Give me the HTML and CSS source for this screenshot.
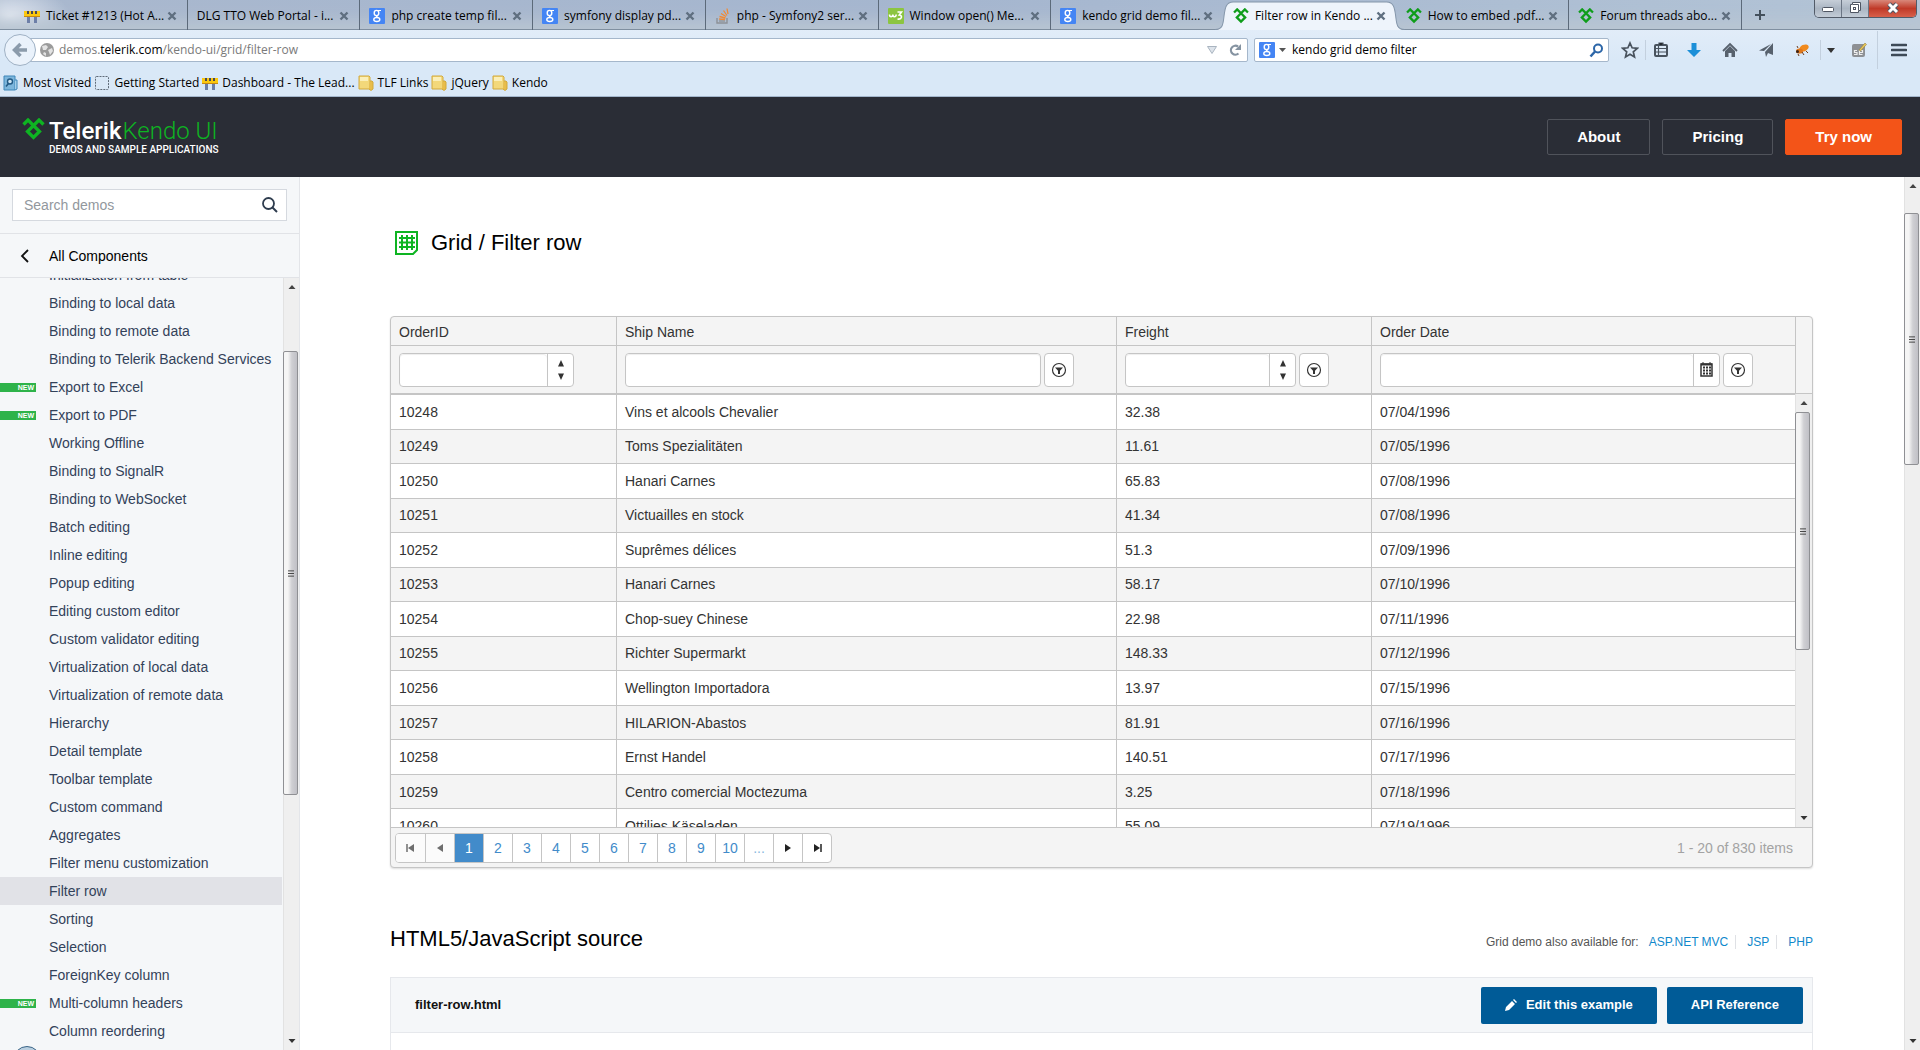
FILE: index.html
```html
<!DOCTYPE html>
<html lang="en">
<head>
<meta charset="utf-8">
<title>Filter row in Kendo UI Grid</title>
<link rel="stylesheet" href="styles.css">
</head>
<body>
<svg class="defs" aria-hidden="true">
  <symbol id="i-barrier" viewBox="0 0 16 16"><path d="M3 8h3v7H3zM10 8h3v7h-3z" fill="#6d7fa8"/><path d="M0 3h16v6H0z" fill="#fbc80f"/><path d="M3 3h2v3H3zM7 3h2v3H7zM11 3h2v3h-2z" fill="#4a4a52"/><path d="M0 8h16v1H0z" fill="#c88a10"/></symbol>
  <symbol id="i-g" viewBox="0 0 16 16"><rect width="16" height="16" rx="1" fill="#4485f4"/><ellipse cx="7.500" cy="5" rx="2.300" ry="2.600" fill="none" stroke="#fff" stroke-width="1.400"/><ellipse cx="7.800" cy="11.500" rx="3" ry="2" fill="none" stroke="#fff" stroke-width="1.400"/><path d="M8 2.500h4M7 8l2 1.500" stroke="#fff" stroke-width="1.200"/></symbol>
  <symbol id="i-so" viewBox="0 0 16 16"><path d="M2 10v5h10v-5" fill="none" stroke="#8d9197" stroke-width="1.400"/><path d="M4 13h6" stroke="#8d9197" stroke-width="1.300"/><path d="M4 11l6 .5M4.500 8.500l6 1.500M6 5.500l5 3M8.500 2.500l3.500 5M12 .5l1 5.500" stroke="#f08a35" stroke-width="1.300"/></symbol>
  <symbol id="i-w3" viewBox="0 0 16 16"><rect width="16" height="16" rx="1" fill="#8cc540"/><path d="M1.500 6.500c0 3 3 3 3.300 0 0 3 3.200 3 3.400 0" fill="none" stroke="#fff" stroke-width="1.600"/><path d="M9.500 4h4l-2.200 3c3.200 0 3 5-1.800 4" fill="none" stroke="#fff" stroke-width="1.600"/></symbol>
  <symbol id="i-telerik" viewBox="0 0 23 23"><path d="M1.500 6.500L6 2l11.500 11.500-6 6-6-6L17 2l4.500 4.500" fill="none" stroke="currentColor" stroke-width="3.300"/></symbol>
  <symbol id="i-x" viewBox="0 0 10 10"><path d="M1.500 1.500l7 7M8.500 1.500l-7 7" stroke="#5f6f80" stroke-width="2.400"/></symbol>
  <symbol id="i-folder" viewBox="0 0 16 16"><path d="M1 1h10l1 1v12H1z" fill="#f3d87a" stroke="#d2a93c"/><path d="M12 6h2l1 1v7l-2 1.500L11 14" fill="#e8bd4b" stroke="#d2a93c"/><path d="M2 2h8v4H2z" fill="#fbefb8"/></symbol>
  <symbol id="i-filter" viewBox="0 0 16 16"><circle cx="8" cy="8" r="6.500" fill="none" stroke="#333" stroke-width="1.200"/><path d="M4 5.500h8L9 8.800V12H7V8.800z" fill="#333"/></symbol>
  <symbol id="i-spin" viewBox="0 0 8 20"><path d="M1 6.500L4 0l3 6.500zM1 13.500L4 20l3-6.500z" fill="#333"/></symbol>
  <symbol id="i-up" viewBox="0 0 8 8"><path d="M.5 6L4 2l3.500 4z" fill="#444"/></symbol>
  <symbol id="i-down" viewBox="0 0 8 8"><path d="M.5 2L4 6l3.500-4z" fill="#333"/></symbol>
  <symbol id="i-grip" viewBox="0 0 8 9"><path d="M0 1h8M0 4.500h8M0 8h8" stroke="#444" stroke-width="1.300"/></symbol>
</svg>

<div class="browser">
  <div class="tabstrip">
    <div class="tabs">
      <div class="tab"><svg class="fav"><use href="#i-barrier"/></svg><span>Ticket #1213 (Hot A...</span><svg class="x"><use href="#i-x"/></svg></div>
      <div class="tab"><span>DLG TTO Web Portal - i...</span><svg class="x"><use href="#i-x"/></svg></div>
      <div class="tab"><svg class="fav"><use href="#i-g"/></svg><span>php create temp fil...</span><svg class="x"><use href="#i-x"/></svg></div>
      <div class="tab"><svg class="fav"><use href="#i-g"/></svg><span>symfony display pd...</span><svg class="x"><use href="#i-x"/></svg></div>
      <div class="tab"><svg class="fav"><use href="#i-so"/></svg><span>php - Symfony2 ser...</span><svg class="x"><use href="#i-x"/></svg></div>
      <div class="tab"><svg class="fav"><use href="#i-w3"/></svg><span>Window open() Me...</span><svg class="x"><use href="#i-x"/></svg></div>
      <div class="tab before-active"><svg class="fav"><use href="#i-g"/></svg><span>kendo grid demo fil...</span><svg class="x"><use href="#i-x"/></svg></div>
      <div class="tab active"><svg class="shape" viewBox="0 0 189 30" preserveAspectRatio="none"><path d="M0 30C8 30 8 24 9 16C10 8 11 2 18 2H171C178 2 179 8 180 16C181 24 181 30 189 30z" fill="#eef4fb"/><path d="M0 29.500C8 29.500 8 24 9 16C10 8 11 2 18 2H171C178 2 179 8 180 16C181 24 181 29.500 189 29.500" fill="none" stroke="#8496aa"/></svg><svg class="fav green"><use href="#i-telerik"/></svg><span>Filter row in Kendo ...</span><svg class="x"><use href="#i-x"/></svg></div>
      <div class="tab"><svg class="fav green"><use href="#i-telerik"/></svg><span>How to embed .pdf...</span><svg class="x"><use href="#i-x"/></svg></div>
      <div class="tab"><svg class="fav green"><use href="#i-telerik"/></svg><span>Forum threads abo...</span><svg class="x"><use href="#i-x"/></svg></div>
    </div>
    <button class="newtab" aria-label="New tab"><svg width="12" height="12"><path d="M6 1v10M1 6h10" stroke="#43505c" stroke-width="2"/></svg></button>
    <div class="winbtns">
      <button aria-label="Minimize"><svg width="14" height="16"><rect x="1.500" y="7.500" width="11" height="4" rx="1" fill="#fff" stroke="#4f5663"/></svg></button>
      <button aria-label="Restore"><svg width="14" height="16"><path d="M4.500 2.500h8v8h-2v2h-8v-8h2z" fill="#fff" stroke="#4f5663"/><path d="M5 4.500h5.500V10" fill="none" stroke="#4f5663"/><rect x="5.500" y="7.500" width="2" height="2" fill="#fff" stroke="#4f5663"/></svg></button>
      <button class="close" aria-label="Close"><svg width="14" height="16"><path d="M3 4l8 8M11 4l-8 8" stroke="#4f5663" stroke-width="5"/><path d="M3 4l8 8M11 4l-8 8" stroke="#fff" stroke-width="3"/></svg></button>
    </div>
  </div>

  <div class="navbar">
    <button class="back" aria-label="Back"><svg width="16" height="16"><path d="M15 8H4M8.500 2L2.500 8l6 6" fill="none" stroke="#8b9bab" stroke-width="3.500"/></svg></button>
    <div class="url">
      <svg width="14" height="14"><circle cx="7" cy="7" r="7" fill="#9b9b9b"/><path d="M2 3l4-1 2 2-2 3-3 0zM8 7l4-2 1 3-3 4-1-3zM4 9l2 1v3l-3-2z" fill="#e3e3e3"/></svg>
      <span class="addr">demos.<b>telerik.com</b>/kendo-ui/grid/filter-row</span>
      <svg width="10" height="8"><path d="M.5 .5h9L5 7.500z" fill="#dde3ea" stroke="#a9b4c0"/></svg>
      <svg width="12" height="14"><path d="M9.500 10.500A4.500 4.500 0 1 1 9 3.500" fill="none" stroke="#8593a1" stroke-width="2.200"/><path d="M12 1v6H6z" fill="#8593a1"/></svg>
    </div>
    <div class="search">
      <svg width="16" height="16"><use href="#i-g"/></svg>
      <svg width="7" height="4"><path d="M0 0h7L3.500 4z" fill="#555"/></svg>
      <input type="text" aria-label="Search" value="kendo grid demo filter">
      <svg width="15" height="15"><circle cx="9" cy="5.500" r="4" fill="none" stroke="#2c66a8" stroke-width="2"/><path d="M6 8.500L1.500 13.500" stroke="#2c66a8" stroke-width="2.500"/></svg>
    </div>
    <div class="tools">
      <button class="w30" aria-label="Bookmark"><svg width="18" height="18"><path d="M9 2l2.100 4.800 5.200.5-4 3.500 1.200 5.200L9 13.300 4.500 16l1.200-5.200-4-3.500 5.200-.5z" fill="none" stroke="#49535e" stroke-width="1.700"/></svg></button>
      <i class="sep"></i>
      <button class="w30" aria-label="Bookmarks list"><svg width="16" height="16"><rect x="2" y="3" width="12" height="11" rx="1" fill="none" stroke="#49535e" stroke-width="2"/><path d="M6 1h4v2H6zM3 6.500h10M3 10h10M5.500 4v9" stroke="#49535e" stroke-width="1.200"/></svg></button>
      <button class="w36" aria-label="Downloads"><svg width="16" height="16"><path d="M5.500 1h5v7H15l-7 7-7-7h4.500z" fill="#1c8fd8"/></svg></button>
      <button class="w36" aria-label="Home"><svg width="16" height="16"><path d="M1 9l7-7 7 7" fill="none" stroke="#57616d" stroke-width="1.800"/><path d="M3 9l5-5 5 5v6H9.500v-4h-3v4H3z" fill="#57616d"/></svg></button>
      <button class="w36" aria-label="Send"><svg width="16" height="16"><path d="M15 1v12l-5-2-2 4-1-5zM13 2L6 9 1 8.500z" fill="#57616d"/></svg></button>
      <button class="w36" aria-label="Firebug"><svg width="16" height="16"><ellipse cx="10" cy="6" rx="5" ry="3.200" transform="rotate(-25 10 6)" fill="#f08a1d"/><ellipse cx="5.500" cy="9" rx="3.500" ry="2.600" fill="#e0761a"/><circle cx="3.500" cy="9.500" r="1.500" fill="#3a2318"/><path d="M4 12l1 2M8 10l2 3M12 9l2 2M4 6l-1-2" stroke="#6b3a1a"/></svg></button>
      <i class="sep"></i>
      <button class="w20" aria-label="More"><svg width="8" height="5"><path d="M0 0h8L4 5z" fill="#333"/></svg></button>
      <button class="w36" aria-label="Selenium"><svg width="16" height="16"><rect x="1" y="2" width="13" height="13" rx="2" fill="#8d9094"/><path d="M6 8.500H3.500v2H6v2H3M11.500 12.500H8.500v-4h3v2h-3" fill="none" stroke="#eee" stroke-width="1.200"/><path d="M8 8l6-7 1.500 1.500L9.500 9z" fill="#e9c75a" stroke="#8a7430" stroke-width=".5"/></svg></button>
      <i class="sep tall"></i>
      <button class="w42" aria-label="Menu"><svg width="16" height="14"><path d="M1 2h14M1 7h14M1 12h14" stroke="#3e4a57" stroke-width="2.600" stroke-linecap="round"/></svg></button>
    </div>
  </div>

  <div class="bookmarks">
    <a href="#"><svg width="16" height="16"><path d="M1 1h11v14H1z" fill="#7db6dc" stroke="#3f86b8"/><path d="M12 5h2v9l-2 1" fill="#a5cfea" stroke="#3f86b8"/><circle cx="7" cy="6.500" r="2.500" fill="#cfe6f5" stroke="#235b86" stroke-width="1.400"/><path d="M5.500 8.500L3 11.500" stroke="#235b86" stroke-width="1.600"/></svg>Most Visited</a>
    <a href="#"><svg width="16" height="16"><rect x="1.500" y="1.500" width="13" height="13" rx="1" fill="none" stroke="#5f6b78" stroke-dasharray="2 1"/></svg>Getting Started</a>
    <a href="#"><svg width="16" height="16"><use href="#i-barrier"/></svg>Dashboard - The Lead...</a>
    <a href="#"><svg width="16" height="16"><use href="#i-folder"/></svg>TLF Links</a>
    <a href="#"><svg width="16" height="16"><use href="#i-folder"/></svg>jQuery</a>
    <a href="#"><svg width="16" height="16"><use href="#i-folder"/></svg>Kendo</a>
  </div>
</div>

<header class="site">
  <a class="logo" href="#">
    <svg class="mark"><use href="#i-telerik"/></svg>
    <span class="names"><span class="brand"><b>Telerik</b> <em>Kendo UI</em></span><span class="tagline">DEMOS AND SAMPLE APPLICATIONS</span></span>
  </a>
  <nav class="actions">
    <a href="#">About</a><a href="#">Pricing</a><a class="primary" href="#">Try now</a>
  </nav>
</header>

<div class="page">
  <aside class="sidebar">
    <div class="demo-search">
      <input type="text" placeholder="Search demos" aria-label="Search demos">
      <svg width="16" height="16"><circle cx="6.500" cy="6.500" r="5.500" fill="none" stroke="#2e3c4e" stroke-width="1.800"/><path d="M10.500 10.500l4.500 4.500" stroke="#2e3c4e" stroke-width="2"/></svg>
    </div>
    <a class="all" href="#"><svg width="9" height="14"><path d="M8 1L2 7l6 6" fill="none" stroke="#111" stroke-width="1.800"/></svg>All Components</a>
    <div class="side-scroll">
      <ul class="demo-list">
        <li><a href="#">Initialization from table</a></li>
        <li><a href="#">Binding to local data</a></li>
        <li><a href="#">Binding to remote data</a></li>
        <li><a href="#">Binding to Telerik Backend Services</a></li>
        <li><span class="new">NEW</span><a href="#">Export to Excel</a></li>
        <li><span class="new">NEW</span><a href="#">Export to PDF</a></li>
        <li><a href="#">Working Offline</a></li>
        <li><a href="#">Binding to SignalR</a></li>
        <li><a href="#">Binding to WebSocket</a></li>
        <li><a href="#">Batch editing</a></li>
        <li><a href="#">Inline editing</a></li>
        <li><a href="#">Popup editing</a></li>
        <li><a href="#">Editing custom editor</a></li>
        <li><a href="#">Custom validator editing</a></li>
        <li><a href="#">Virtualization of local data</a></li>
        <li><a href="#">Virtualization of remote data</a></li>
        <li><a href="#">Hierarchy</a></li>
        <li><a href="#">Detail template</a></li>
        <li><a href="#">Toolbar template</a></li>
        <li><a href="#">Custom command</a></li>
        <li><a href="#">Aggregates</a></li>
        <li><a href="#">Filter menu customization</a></li>
        <li class="current"><a href="#">Filter row</a></li>
        <li><a href="#">Sorting</a></li>
        <li><a href="#">Selection</a></li>
        <li><a href="#">ForeignKey column</a></li>
        <li><span class="new">NEW</span><a href="#">Multi-column headers</a></li>
        <li><a href="#">Column reordering</a></li>
      </ul>
      <div class="bar side-bar"><svg class="arrow"><use href="#i-up"/></svg><div class="thumb"><svg class="grip"><use href="#i-grip"/></svg></div><svg class="arrow"><use href="#i-down"/></svg></div>
    </div>
    <span class="orb"></span>
  </aside>

  <main class="content">
    <h1><svg width="24" height="24"><path d="M1 1h21v18l-4 4H1z" fill="none" stroke="#0eb422" stroke-width="2"/><path d="M7 4v15M12 4v15M17 4v15M4 7h16M4 11.500h16M4 16h16" stroke="#0eb422" stroke-width="2"/></svg>Grid / Filter row</h1>

    <div class="grid">
      <div class="grid-head">
        <table>
          <colgroup><col class="c-id"><col class="c-ship"><col class="c-freight"><col></colgroup>
          <thead>
            <tr><th>OrderID</th><th>Ship Name</th><th>Freight</th><th>Order Date</th></tr>
            <tr class="filters">
              <th><div class="fcell"><span class="field"><input type="text" aria-label="OrderID filter"><button class="spin" aria-label="Change value"><svg width="8" height="20"><use href="#i-spin"/></svg></button></span></div></th>
              <th><div class="fcell"><span class="field"><input type="text" aria-label="Ship Name filter"></span><button class="fbtn" aria-label="Filter"><svg width="16" height="16"><use href="#i-filter"/></svg></button></div></th>
              <th><div class="fcell"><span class="field"><input type="text" aria-label="Freight filter"><button class="spin" aria-label="Change value"><svg width="8" height="20"><use href="#i-spin"/></svg></button></span><button class="fbtn" aria-label="Filter"><svg width="16" height="16"><use href="#i-filter"/></svg></button></div></th>
              <th><div class="fcell"><span class="field"><input type="text" aria-label="Order Date filter"><button class="spin" aria-label="Open calendar"><svg width="13" height="15"><path d="M1 2h11v12H1z" fill="none" stroke="#333" stroke-width="1.500"/><path d="M1 2.500h11M3 5.500h2M6 5.500h2M9 5.500h2M3 8.500h2M6 8.500h2M9 8.500h2M3 11.500h2M6 11.500h2M9 11.500h2" stroke="#333" stroke-width="2"/><path d="M3 0v2M10 0v2" stroke="#333"/></svg></button></span><button class="fbtn" aria-label="Filter"><svg width="16" height="16"><use href="#i-filter"/></svg></button></div></th>
            </tr>
          </thead>
        </table>
        <div class="head-gap"></div>
      </div>
      <div class="grid-body">
        <table>
          <colgroup><col class="c-id"><col class="c-ship"><col class="c-freight"><col></colgroup>
          <tbody>
            <tr><td>10248</td><td>Vins et alcools Chevalier</td><td>32.38</td><td>07/04/1996</td></tr>
            <tr><td>10249</td><td>Toms Spezialitäten</td><td>11.61</td><td>07/05/1996</td></tr>
            <tr><td>10250</td><td>Hanari Carnes</td><td>65.83</td><td>07/08/1996</td></tr>
            <tr><td>10251</td><td>Victuailles en stock</td><td>41.34</td><td>07/08/1996</td></tr>
            <tr><td>10252</td><td>Suprêmes délices</td><td>51.3</td><td>07/09/1996</td></tr>
            <tr><td>10253</td><td>Hanari Carnes</td><td>58.17</td><td>07/10/1996</td></tr>
            <tr><td>10254</td><td>Chop-suey Chinese</td><td>22.98</td><td>07/11/1996</td></tr>
            <tr><td>10255</td><td>Richter Supermarkt</td><td>148.33</td><td>07/12/1996</td></tr>
            <tr><td>10256</td><td>Wellington Importadora</td><td>13.97</td><td>07/15/1996</td></tr>
            <tr><td>10257</td><td>HILARION-Abastos</td><td>81.91</td><td>07/16/1996</td></tr>
            <tr><td>10258</td><td>Ernst Handel</td><td>140.51</td><td>07/17/1996</td></tr>
            <tr><td>10259</td><td>Centro comercial Moctezuma</td><td>3.25</td><td>07/18/1996</td></tr>
            <tr><td>10260</td><td>Ottilies Käseladen</td><td>55.09</td><td>07/19/1996</td></tr>
          </tbody>
        </table>
        <div class="bar grid-bar"><svg class="arrow"><use href="#i-up"/></svg><div class="thumb"><svg class="grip"><use href="#i-grip"/></svg></div><svg class="arrow"><use href="#i-down"/></svg></div>
      </div>
      <div class="pager">
        <div class="pages">
          <button class="off" disabled aria-label="First page"><svg width="9" height="8"><path d="M1 0v8" stroke="#333" stroke-width="1.500"/><path d="M8 0v8L2 4z" fill="#333"/></svg></button>
          <button class="off" disabled aria-label="Previous page"><svg width="6" height="8"><path d="M6 0v8L0 4z" fill="#333"/></svg></button>
          <button class="selected">1</button><button>2</button><button>3</button><button>4</button><button>5</button><button>6</button><button>7</button><button>8</button><button>9</button><button>10</button><button class="dots">...</button>
          <button aria-label="Next page"><svg width="6" height="8"><path d="M0 0v8l6-4z" fill="#222"/></svg></button>
          <button aria-label="Last page"><svg width="9" height="8"><path d="M8 0v8" stroke="#222" stroke-width="1.500"/><path d="M1 0v8l6-4z" fill="#222"/></svg></button>
        </div>
        <span class="info">1 - 20 of 830 items</span>
      </div>
    </div>

    <div class="source-head">
      <h2>HTML5/JavaScript source</h2>
      <p>Grid demo also available for:</p>
      <a href="#">ASP.NET MVC</a><a href="#">JSP</a><a href="#">PHP</a>
    </div>
    <section class="source">
      <div class="source-bar">
        <h3>filter-row.html</h3>
        <button><svg width="12" height="12"><path d="M0 12l1-4 6-6 3 3-6 6zM8 1l1-1 3 3-1 1z" fill="#fff"/></svg>Edit this example</button>
        <button>API Reference</button>
      </div>
    </section>
  </main>
  <div class="bar page-bar"><svg class="arrow"><use href="#i-up"/></svg><div class="thumb"><svg class="grip"><use href="#i-grip"/></svg></div><svg class="arrow"><use href="#i-down"/></svg></div>
</div>
</body>
</html>
```
FILE: styles.css
```css
* { box-sizing: border-box; }
html, body { height: 100%; }
body {
  margin: 0;
  display: flex;
  flex-direction: column;
  overflow: hidden;
  background: #fff;
  color: #333;
  font: 14px/20px "Liberation Sans", Arial, sans-serif;
}
a { color: inherit; text-decoration: none; }
button { padding: 0; border: 0; background: none; font: inherit; color: inherit; }
input { padding: 0; border: 0; background: none; font: inherit; color: inherit; min-width: 0; }
svg { flex: none; display: block; }
h1, h2, h3, p, ul { margin: 0; padding: 0; font-weight: normal; }
.defs { position: absolute; width: 0; height: 0; }

/* Browser window */
.browser {
  flex: none;
  font: 12px/16px "Open Sans", "Noto Sans", sans-serif;
  color: #000;
  background: linear-gradient(#eaf1fa, #d9e8f7 60px, #d9e8f7);
  border-bottom: 1px solid #a3b6cc;
}
.tabstrip {
  display: flex;
  align-items: flex-start;
  height: 30px;
  padding-left: 15px;
  background: radial-gradient(60px 30px at 10px 16px, #e2e8f1, transparent), linear-gradient(90deg, #a9b8ce, #a5b6cf 50%, #b3c4d6);
  border-bottom: 1px solid #7f8fa0;
  box-shadow: inset 0 -16px 16px -8px #bac6d2;
}
.tabs { display: flex; flex: 0 1 1727px; min-width: 0; }
.tab {
  position: relative;
  display: flex;
  flex: 1 1 0;
  min-width: 0;
  align-items: center;
  height: 30px;
  padding: 2px 10px 0 9px;
  border-right: 1px solid #5c6a7a;
}
.tab span { flex: 1; position: relative; margin-left: 6px; white-space: nowrap; }
.tab span:first-child { margin-left: 0; }
.tab .fav { position: relative; width: 16px; height: 16px; }
.tab .x { position: relative; width: 10px; height: 10px; }
.green { color: #0f9d1a; }
.tab.active, .tab.before-active { border-right-color: transparent; }
.shape { position: absolute; left: -9px; top: 0; width: calc(100% + 18px); height: 30px; }
.newtab { display: flex; align-items: center; justify-content: center; width: 36px; height: 30px; }
.winbtns {
  display: flex;
  margin: 0 3px 0 auto;
  border: 1px solid #525b68;
  border-top: 0;
  border-radius: 0 0 5px 5px;
  overflow: hidden;
}
.winbtns button {
  display: flex;
  justify-content: center;
  width: 27px;
  height: 17px;
  border-right: 1px solid #6b7584;
  background: linear-gradient(#c6ced8, #aab5c2 50%, #c3ccd7);
}
.winbtns .close { width: 47px; border: 0; background: linear-gradient(#d9887a, #c03a28 50%, #d8604a); }

.navbar { display: flex; align-items: center; height: 40px; padding-left: 4px; }
.back {
  position: relative;
  display: flex;
  align-items: center;
  justify-content: center;
  width: 32px;
  height: 32px;
  border: 1px solid #9fb1c4;
  border-radius: 50%;
  background: #eaf2fb;
}
.url, .search { display: flex; align-items: center; height: 24px; border: 1px solid #a5b7cb; border-radius: 2px; background: #fff; }
.url { flex: 1; margin-left: -8px; padding: 0 6px 0 11px; color: #7a7a7a; }
.url b { font-weight: normal; color: #000; }
.addr { flex: 1; margin-left: 5px; }
.url svg + svg { margin-left: 12px; }
.search { width: 355px; margin-left: 6px; padding: 0 4px; }
.search svg + svg { margin-left: 4px; }
.search input { flex: 1; margin-left: 6px; outline: 0; }
.tools { display: flex; align-items: center; margin-left: 6px; }
.tools button { display: flex; align-items: center; justify-content: center; height: 32px; }
.sep { width: 1px; height: 20px; background: #c3d0de; }
.sep.tall { height: 38px; }
.w20 { width: 20px; }
.w30 { width: 30px; }
.w36 { width: 36px; }
.w42 { width: 42px; }
.bookmarks { display: flex; align-items: center; height: 26px; padding-left: 3px; gap: 3px; }
.bookmarks a { display: flex; align-items: center; gap: 4px; }

/* Site header */
.site {
  flex: none;
  display: flex;
  justify-content: space-between;
  align-items: center;
  height: 80px;
  padding: 0 18px 0 22px;
  background: #2a2d36;
  color: #fff;
}
.logo { display: flex; gap: 4px; }
.mark { width: 23px; height: 23px; color: #0eb422; }
.names { display: flex; flex-direction: column; }
.brand { font: 24px/26px Roboto, sans-serif; }
.brand b { font-weight: 500; }
.brand em { margin-left: -5px; font-style: normal; font-weight: 300; color: #0eb422; }
.tagline { font: 500 10px/12px Roboto, sans-serif; }
.actions { display: flex; gap: 12px; }
.actions a {
  padding: 0 29px;
  border: 1px solid #50535b;
  border-radius: 2px;
  font: bold 15px/34px "Liberation Sans", Arial, sans-serif;
}
.actions .primary { border-color: #f35418; background: #f35418; }

/* Page body */
.page { flex: 1; display: flex; min-height: 0; }
.sidebar {
  position: relative;
  flex: none;
  display: flex;
  flex-direction: column;
  width: 300px;
  border-right: 1px solid #e3e5e9;
  background: #f5f7f9;
  overflow: hidden;
}
.demo-search {
  display: flex;
  align-items: center;
  height: 32px;
  margin: 12px;
  padding: 0 8px 0 11px;
  border: 1px solid #d5d9df;
  background: #fff;
}
.demo-search input { flex: 1; outline: 0; }
.demo-search input::placeholder { color: #92979d; opacity: 1; }
.all {
  display: flex;
  align-items: center;
  height: 45px;
  padding-left: 20px;
  gap: 20px;
  border-top: 1px solid #e1e3e7;
  border-bottom: 1px solid #e1e3e7;
  color: #000;
}
.side-scroll { flex: 1; display: flex; min-height: 0; overflow: hidden; }
.demo-list { flex: 1; margin-top: -17px; list-style: none; color: #33425a; }
.demo-list li { display: flex; align-items: center; height: 28px; margin-right: 1px; }
.demo-list a { margin-left: 49px; white-space: nowrap; }
.new {
  width: 36px;
  height: 9px;
  margin-right: -36px;
  padding-right: 2px;
  background: #2eb34a;
  color: #fff;
  font: bold 7px/9px "Liberation Sans", Arial, sans-serif;
  text-align: right;
}
.current { background: #e1e2e7; }
.orb { position: absolute; left: 13px; bottom: -24px; width: 28px; height: 28px; border: 1px solid #3a6487; border-radius: 50%; background: #b9cfe0; }

/* Scrollbars */
.bar { flex: none; display: flex; flex-direction: column; align-items: flex-start; width: 16px; border-left: 1px solid #e2e2e2; background: #efefef; }
.arrow { align-self: center; width: 8px; height: 8px; margin: 5px 0; }
.thumb {
  display: flex;
  align-items: center;
  justify-content: center;
  width: 15px;
  margin: 0 0 auto -1px;
  border: 1px solid #8f9094;
  border-radius: 2px;
  background: linear-gradient(90deg, #f5f5f5 30%, #cfcfd3 60%, #c0c0c6);
}
.grip { width: 6px; height: 9px; }
.side-bar .thumb { height: 444px; margin-top: 55px; }
.grid-bar { width: 17px; }
.grid-bar .thumb { height: 238px; }
.page-bar .thumb { height: 252px; margin-top: 18px; }

/* Content */
.content { flex: 1; min-width: 0; padding: 51px 91px 0 90px; overflow: hidden; }
h1 { display: flex; align-items: center; gap: 12px; padding-left: 5px; font-size: 22px; line-height: 30px; color: #000; }
.grid {
  margin-top: 58px;
  border: 1px solid #c5c5c5;
  border-radius: 4px;
  background: #f4f4f4;
  box-shadow: 0 1px 2px #ddd;
  overflow: hidden;
}
.grid-head, .grid-body { display: flex; }
.grid table { flex: 1; width: 100%; min-width: 0; table-layout: fixed; border-spacing: 0; }
.c-id { width: 225px; }
.c-ship { width: 500px; }
.c-freight { width: 255px; }
.grid th, .grid td { padding: 0 8px; text-align: left; font-weight: normal; white-space: nowrap; }
.grid th + th, .grid td + td { border-left: 1px solid #c5c5c5; }
.grid th { height: 29px; padding-top: 2px; border-bottom: 1px solid #c5c5c5; }
.grid .filters th { height: 48px; padding: 0 42px 0 8px; }
.head-gap { flex: none; width: 17px; border-left: 1px solid #c5c5c5; border-bottom: 1px solid #c5c5c5; }
.fcell { display: flex; gap: 3px; }
.field, .fbtn { height: 34px; border: 1px solid #c5c5c5; border-radius: 4px; background: #fff; }
.field { flex: 1; display: flex; min-width: 0; }
.field input { flex: 1; padding: 0 6px; outline: 0; border-radius: 4px; box-shadow: inset 0 1px 1px #eee; }
.spin, .fbtn { flex: none; display: flex; align-items: center; justify-content: center; }
.spin { width: 26px; border-left: 1px solid #c5c5c5; }
.fbtn { width: 30px; }
.grid-body { height: 433px; overflow: hidden; }
.grid-body table { height: 449px; background: #fff; }
.grid td { border-top: 1px solid #c5c5c5; }
.grid-body tr:nth-child(even) { background: #f4f4f4; }
.pager { display: flex; align-items: center; justify-content: space-between; height: 40px; padding: 0 19px 0 4px; border-top: 1px solid #c5c5c5; }
.pages { display: flex; border: 1px solid #c5c5c5; border-radius: 4px; background: #fff; overflow: hidden; color: #428bca; }
.pages button { display: flex; align-items: center; justify-content: center; width: 29px; height: 28px; }
.pages button + button { border-left: 1px solid #c5c5c5; }
.pages .selected { background: #428bca; color: #fff; }
.pages .off { background: #fbfbfb; }
.pages .off svg { opacity: .7; }
.pages .dots { color: #8ab8e0; }
.info { color: #a3a3a3; }

.source-head { display: flex; align-items: baseline; height: 30px; margin-top: 56px; font-size: 12px; }
h2 { flex: 1; font-size: 22px; line-height: 30px; color: #000; }
.source-head p { margin-right: 10px; color: #555; }
.source-head a { color: #1088cb; line-height: 14px; }
.source-head a + a { margin-left: 7px; padding-left: 11px; border-left: 1px solid #dfe1e5; }
.source { height: 200px; margin-top: 23px; border: 1px solid #e6e8ec; }
.source-bar { display: flex; align-items: center; gap: 10px; height: 55px; padding: 0 9px 0 24px; border-bottom: 1px solid #e6e8ec; background: #f5f7f9; font-weight: bold; font-size: 13px; }
h3 { flex: 1; font-size: 13px; font-weight: bold; color: #111; }
.source-bar button { display: flex; align-items: center; gap: 9px; height: 37px; padding: 0 24px; border-radius: 2px; background: #005b97; color: #fff; }
```
